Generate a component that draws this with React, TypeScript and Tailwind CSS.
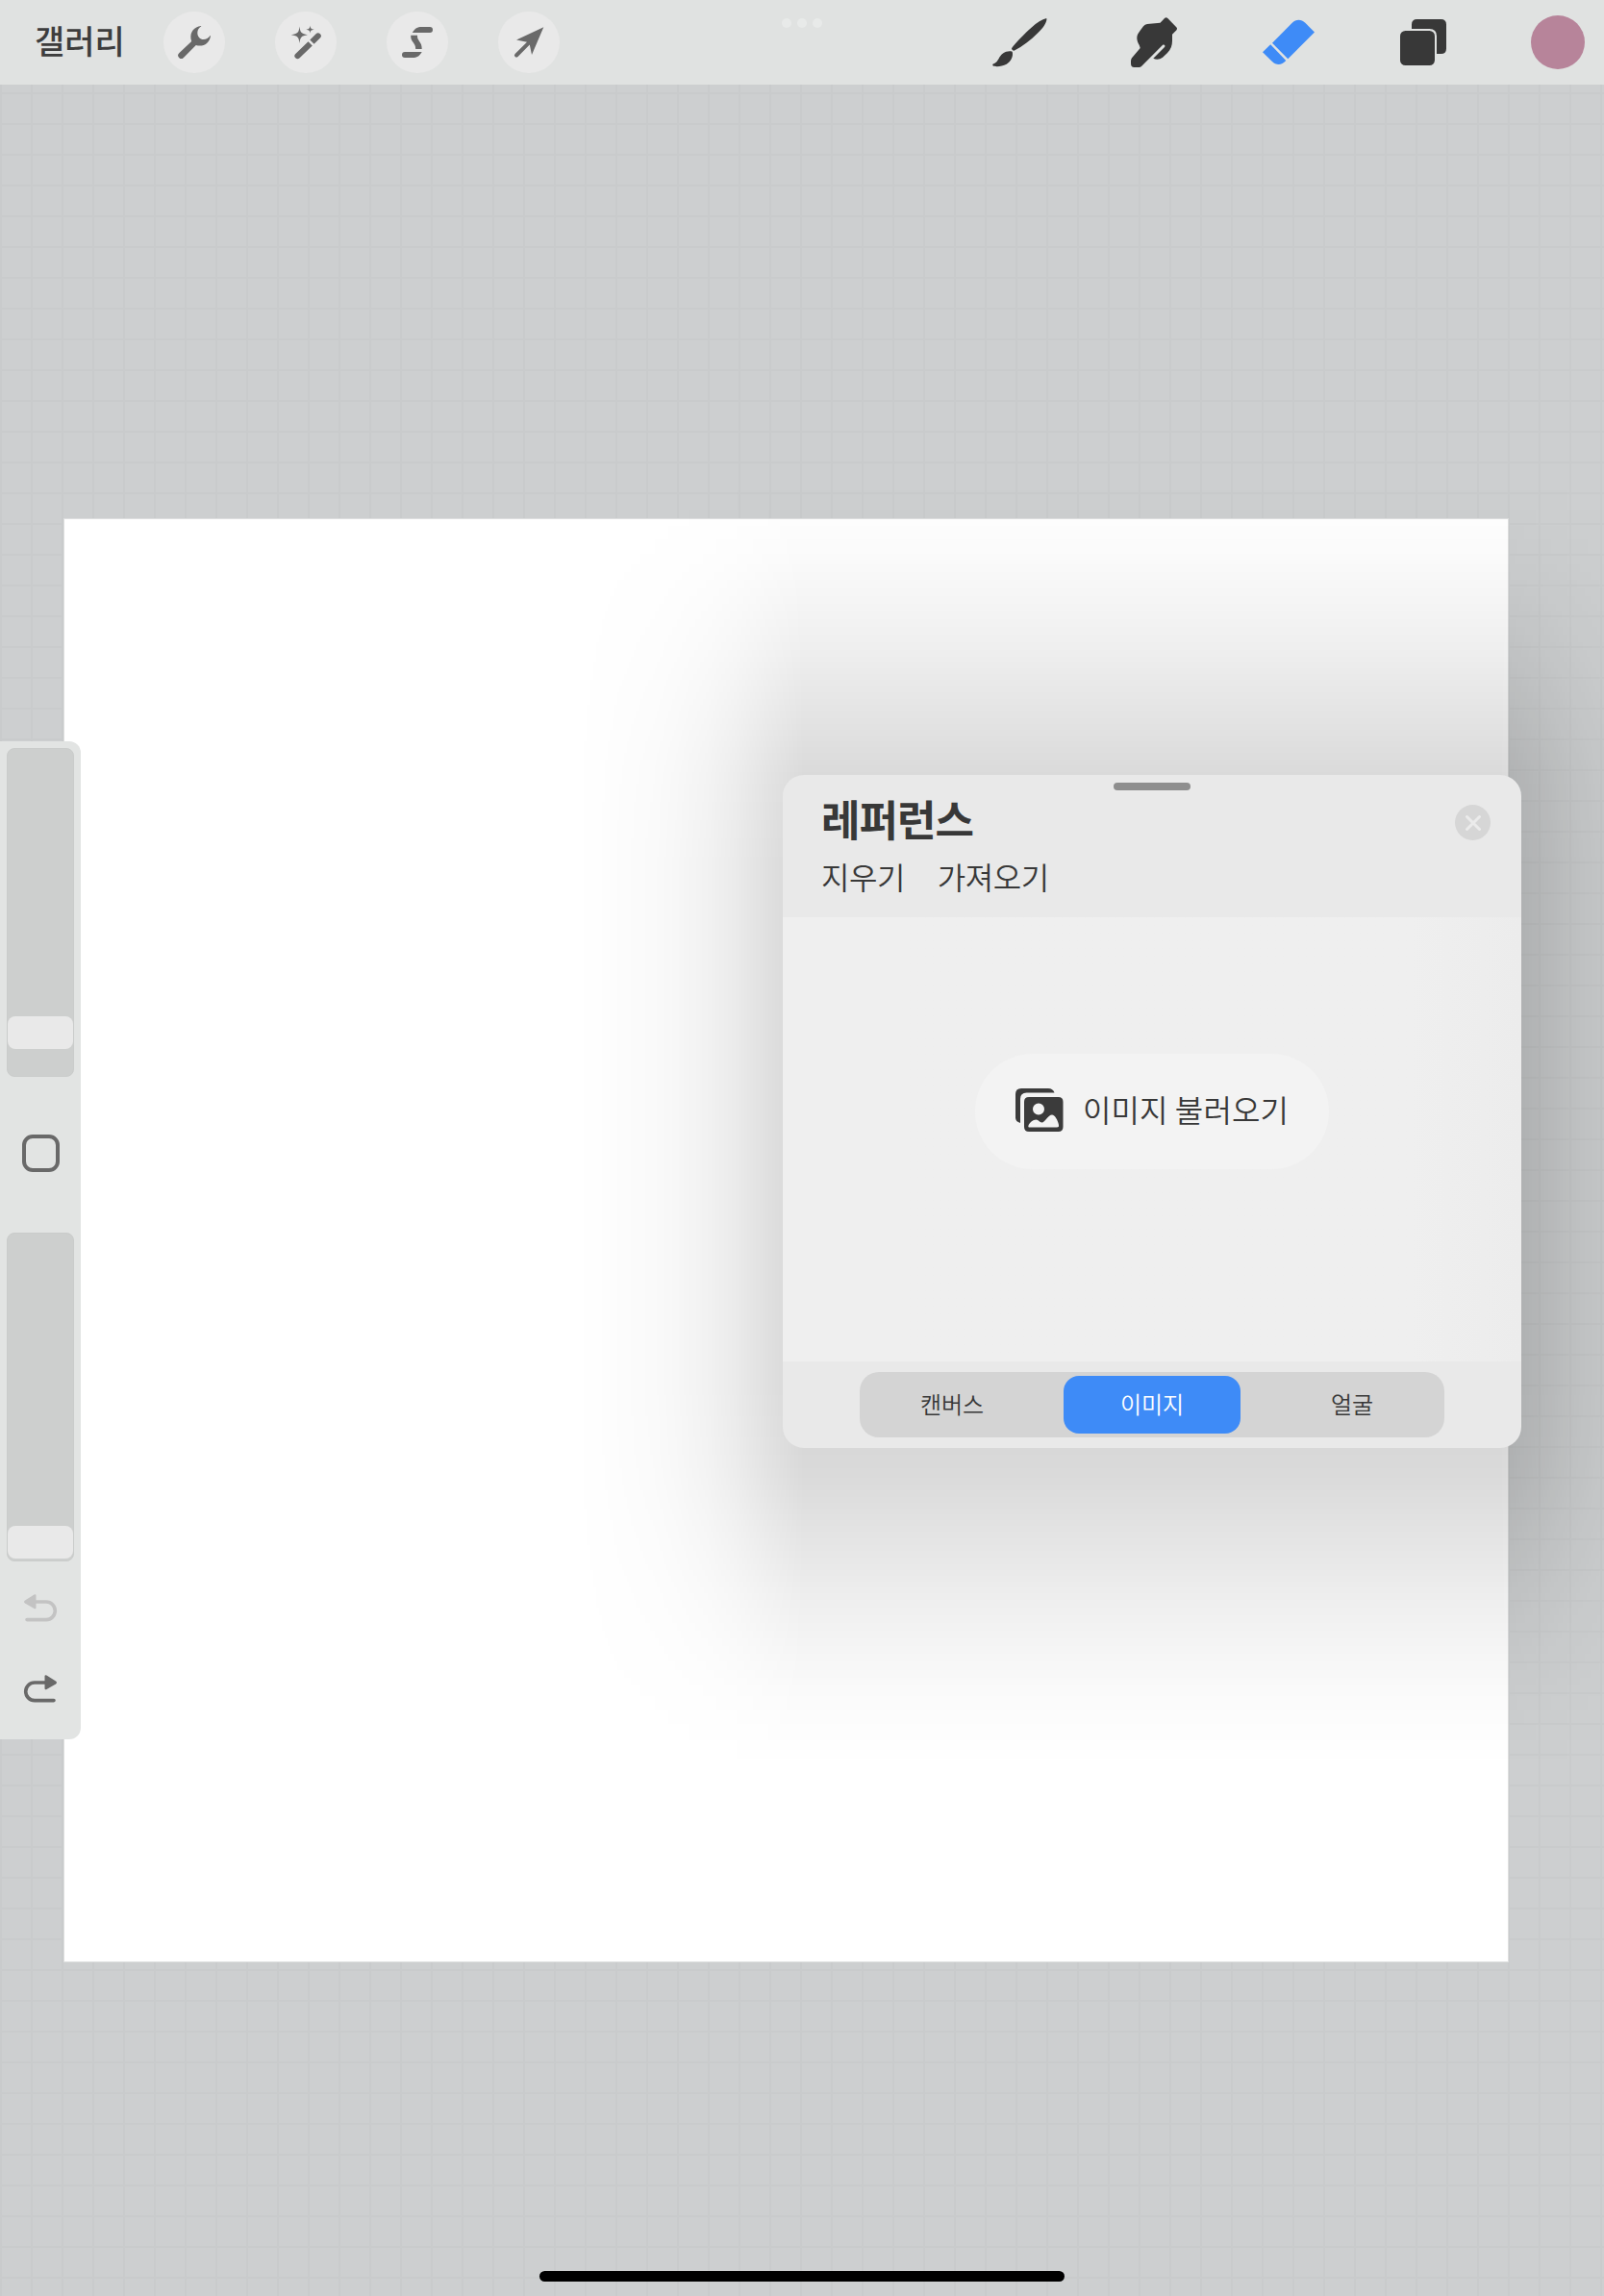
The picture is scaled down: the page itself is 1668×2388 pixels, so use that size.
import React from 'react'

const WrenchIcon = () => (
  <svg viewBox="0 0 64 64" className="w-16 h-16" fill="#696969">
    <path d="M39 15c-7 1-11.500 6-10.500 13.500l.7 2.500L16.200 43.200a3.300 3.300 0 0 0 4.700 4.700L33.800 35c7 2.200 14-1.500 15.200-9.800l-.4-.2c-2.500 3.500-6 5-9.600 3.500-3.500-2-4-5.500-3.500-8 .5-2.500 2-4 3.800-5z" />
  </svg>
)

const WandIcon = () => (
  <svg viewBox="0 0 64 64" className="w-16 h-16" fill="#696969">
    <path d="M25.500 15.500c.7 6.200 1.600 7.600 8.500 8.700-6.900 1-7.800 2.500-8.500 8.800-.7-6.300-1.600-7.800-8.700-8.800 7.100-1.100 8-2.500 8.700-8.700z" transform="translate(0 12) scale(1 1) translate(0 -12)" />
    <path d="M36.500 14.500c.4 3 .9 3.700 4.200 4.200-3.300.5-3.800 1.100-4.200 4.100-.4-3-.9-3.600-4.200-4.100 3.300-.5 3.800-1.200 4.200-4.200z" />
    <path d="M34.500 31.200l4.300 4.300-13.200 12.800a3 3 0 0 1-4.300-4.300zM36.300 29.500l6.300-6.300a3 3 0 0 1 4.300 4.300l-6.300 6.300z" transform="translate(0 0)" />
  </svg>
)

const SelectIcon = () => (
  <svg viewBox="0 0 64 64" className="w-16 h-16" fill="#696969">
    <path d="M26.800 22c2.500-4.500 5.500-6 9.500-6H45a3 3 0 0 1 0 6z" />
    <path d="M25.200 24.800h6.800c-.5 6 5 6.500 4.700 14.200h-6.500c.3-6.500-5.500-7-5-14.200z" />
    <path d="M36.700 42c-2.500 4.500-5.500 6-9.500 6H19a3 3 0 0 1 0-6z" />
  </svg>
)

const ArrowIcon = () => (
  <svg viewBox="0 0 64 64" className="w-16 h-16" fill="#696969">
    <path d="M47.300 16.300L35 45l-2.200-10.500-12.300 12.400a1.900 1.900 0 0 1-2.900-2.900L30 31.700 19 29.500z" />
  </svg>
)

const BrushIcon = () => (
  <svg viewBox="0 0 56 56" className="w-14 h-14 overflow-visible" fill="#383838">
    <path d="M56.300 3c.8 3.500-2.800 9.500-9.300 15.500-7 7.200-15.500 13.500-24.500 18.200-1.400-.2-2.300-1.200-2.500-2.500C24.500 28 33 19.500 40.500 12.700 46.500 7.300 51.500 4 56.300 3z" />
    <path d="M20.700 37.700c1.300 5-1.500 10.300-6 13C10 53 3.500 54 .5 52.200c-.8-1 .3-1.800 1.600-2.200C6.500 48 6.500 42.500 11 39.500c3-2 6.500-2.600 9.700-1.800z" />
  </svg>
)

const SmudgeIcon = () => (
  <svg viewBox="0 0 56 56" className="w-14 h-14" fill="#383838">
    <path d="M39 3q1.700-1.500 3.300 0l9.200 9.600q1.200 1.300 0 2.600L47 19.700v6.800c0 5-1.500 9-5 12.500l-5 4.700c-3 2.200-6.500 2.500-9.700 1L39 33c1.200-1.500-.2-3.200-1.900-2.300L15 53q-1 1-2.600 1H7.500C5 54 4 52.500 4 50v-2.500q0-1.800 1-3.300L13.700 34c-.5-3.500-3.400-6-3.400-10.500.1-3 1-4.500 3-7.300l3.700-5q1.500-2 4-2.200l13.500-1.300z" />
  </svg>
)

const EraserIcon = () => (
  <svg viewBox="0 0 56 56" className="w-14 h-14" fill="#3e8bf7">
    <path d="M11 28.700L31.500 8c4.300-4.300 9.500-4.300 13.800-.3l9.700 9.700-27.700 27.900z" />
    <path d="M9.200 30.300L1 38.300l9.700 9.500c4.500 4.300 9.800 4.500 14.600-.8z" />
  </svg>
)

const LayersIcon = () => (
  <svg viewBox="0 0 48 48" className="w-12 h-12" fill="#383838">
    <rect x="0" y="12" width="36" height="36" rx="5.500" />
    <path d="M12 10V5.500Q12 0 17.500 0h25Q48 0 48 5.500v25q0 5.500-5.500 5.500H38V17.500q0-7.500-7.500-7.500z" />
  </svg>
)

const UndoIcon = () => (
  <svg viewBox="0 0 36 30" className="w-9 h-[30px]">
    <path d="M12 9h12a9.300 9.300 0 0 1 0 18.600H4" fill="none" stroke="currentColor" strokeWidth="3.600" strokeLinecap="round" />
    <path d="M2 7.500l9.500-6q2-1 2 1v12.500q0 2-2 1L2 10.500q-2-1.500 0-3z" fill="currentColor" />
  </svg>
)

const PhotosIcon = () => (
  <svg viewBox="0 0 50 46" className="w-[50px] h-[46px]" fill="#3b3b3b">
    <path d="M5 36Q0 34.500 0 30.500V6q0-6 6-6h28q5 0 6.500 4.500H11.500q-6.500 0-6.500 6.500z" />
    <path fillRule="evenodd" d="M14 9h30.500q5 0 5 5v26q0 5-5 5H14q-5 0-5-5V14q0-5 5-5zM24 15.500a6 6 0 1 0 0 12 6 6 0 0 0 0-12zM14 40.500h29q2.500 0 2-2.500c-1-5-4-10.500-7-10.500-4 0-7.500 8-10.500 8-2.500 0-3.500-3-6-3-3.500 0-7 3.500-8 6q-.6 2 .5 2z" />
  </svg>
)

const TopBar = () => (
  <header className="relative flex h-[88px] w-full items-center justify-between bg-[#e0e2e1] pl-9 pr-5">
    <div className="flex items-center">
      <button className="w-[134px] whitespace-nowrap pb-[5px] text-left text-[34px] font-medium leading-none text-[#3d3d3d]">갤러리</button>
      <div className="flex gap-[52px]">
        <button className="rounded-full bg-[#e9e9e9]"><WrenchIcon /></button>
        <button className="rounded-full bg-[#e9e9e9]"><WandIcon /></button>
        <button className="rounded-full bg-[#e9e9e9]"><SelectIcon /></button>
        <button className="rounded-full bg-[#e9e9e9]"><ArrowIcon /></button>
      </div>
    </div>
    <div className="absolute left-[813px] top-[19px] flex gap-[6px]">
      <span className="h-[10px] w-[10px] rounded-full bg-[#e8eae9]" />
      <span className="h-[10px] w-[10px] rounded-full bg-[#e8eae9]" />
      <span className="h-[10px] w-[10px] rounded-full bg-[#e8eae9]" />
    </div>
    <div className="flex items-center gap-[84px]">
      <BrushIcon />
      <SmudgeIcon />
      <EraserIcon />
      <div className="flex w-14 justify-center"><LayersIcon /></div>
      <span className="h-14 w-14 rounded-full bg-[#b7849a]" />
    </div>
  </header>
)

const Sidebar = () => (
  <aside className="absolute left-0 top-[771px] flex h-[1038px] w-[84px] flex-col items-center rounded-r-xl bg-[#e2e4e3] pt-[7px]">
    <div className="flex h-[342px] w-[70px] flex-col justify-end rounded-lg border border-[#cacccb] bg-[#cdcfce] pb-7">
      <div className="h-[34px] rounded-lg bg-[#e9e9e9]" />
    </div>
    <div className="mt-[60px] h-[39px] w-[39px] rounded-[11px] border-4 border-[#696969]" />
    <div className="mt-[63px] flex h-[342px] w-[70px] flex-col justify-end rounded-lg border border-[#cacccb] bg-[#cdcfce] pb-[2px]">
      <div className="h-[34px] rounded-lg bg-[#e9e9e9]" />
    </div>
    <button className="mt-[33px] text-[#c3c3c3]"><UndoIcon /></button>
    <button className="mt-[54px] -scale-x-100 text-[#696969]"><UndoIcon /></button>
  </aside>
)

// soft shadow behind the floating panel: vertical falloff, masked horizontally
const PanelShadow = () => (
  <div className="absolute left-[596px] top-[500px] h-[1340px] w-[1204px] bg-[linear-gradient(to_bottom,rgba(0,0,0,0)_0px,rgba(0,0,0,0.008)_40px,rgba(0,0,0,0.018)_83px,rgba(0,0,0,0.047)_140px,rgba(0,0,0,0.068)_180px,rgba(0,0,0,0.086)_210px,rgba(0,0,0,0.11)_250px,rgba(0,0,0,0.13)_280px,rgba(0,0,0,0.145)_306px,rgba(0,0,0,0.165)_400px,rgba(0,0,0,0.165)_940px,rgba(0,0,0,0.153)_1006px,rgba(0,0,0,0.145)_1034px,rgba(0,0,0,0.13)_1060px,rgba(0,0,0,0.11)_1090px,rgba(0,0,0,0.086)_1130px,rgba(0,0,0,0.068)_1160px,rgba(0,0,0,0.047)_1200px,rgba(0,0,0,0.018)_1257px,rgba(0,0,0,0.008)_1300px,rgba(0,0,0,0)_1340px)] [mask-image:linear-gradient(to_right,transparent_0px,rgba(0,0,0,0.04)_32px,rgba(0,0,0,0.12)_84px,rgba(0,0,0,0.18)_104px,rgba(0,0,0,0.32)_140px,rgba(0,0,0,0.49)_169px,rgba(0,0,0,0.73)_200px,#000_240px,#000_964px,rgba(0,0,0,0.73)_1004px,rgba(0,0,0,0.49)_1035px,rgba(0,0,0,0.32)_1064px,rgba(0,0,0,0.18)_1100px,transparent_1204px)]" />
)

const ReferencePanel = () => (
  <section className="absolute left-[814px] top-[806px] flex h-[700px] w-[768px] flex-col rounded-[22px] bg-[#e9e9e9] font-[350] text-[#383838]">
    <div className="h-[148px] pt-2">
      <div className="mx-auto h-2 w-20 rounded-full bg-[#8e8e8e]" />
      <div className="flex items-start justify-between pl-10 pr-8">
        <h1 className="mt-[2px] text-[44px] font-bold leading-[54px] tracking-[-1px]">레퍼런스</h1>
        <button className="mt-[15px] flex h-[37px] w-[37px] items-center justify-center rounded-full bg-[#d6d6d6]">
          <svg viewBox="0 0 16 16" className="h-4 w-4" stroke="#ebebeb" strokeWidth="3" strokeLinecap="round">
            <path d="M1.500 1.500l13 13M14.500 1.500l-13 13" />
          </svg>
        </button>
      </div>
      <div className="mt-[13px] flex gap-[34px] pl-10 text-[32px] leading-10 tracking-[-0.500px]">
        <button>지우기</button>
        <button>가져오기</button>
      </div>
    </div>
    <div className="flex h-[462px] items-start justify-center bg-linear-to-r from-[#efefef] from-85% to-[#ececec] pt-[142px]">
      <button className="flex h-[120px] w-[368px] items-center rounded-full bg-[#f3f3f3] pb-[3px] pl-[42px]">
        <PhotosIcon />
        <span className="ml-5 whitespace-nowrap pb-[3px] text-[32px] tracking-[0.100px]">이미지 불러오기</span>
      </button>
    </div>
    <div className="mx-auto mt-[11px] flex h-[68px] w-[608px] items-center justify-between rounded-[20px] bg-[#d4d4d4] px-1 text-2xl">
      <button className="h-[60px] w-[184px] pb-[3px]">캔버스</button>
      <button className="h-[60px] w-[184px] rounded-2xl bg-[#3e8bf7] pb-[3px] text-white">이미지</button>
      <button className="h-[60px] w-[184px] pb-[3px]">얼굴</button>
    </div>
  </section>
)

export default function App() {
  return (
    <div className="relative h-[2388px] w-[1668px] overflow-hidden bg-[#cdcfd0] bg-[linear-gradient(to_right,#c9cbcc_2px,transparent_2px),linear-gradient(to_bottom,#c9cbcc_2px,transparent_2px)] bg-[size:32px_32px] font-['Noto_Sans_CJK_KR',sans-serif]">
      <TopBar />
      <main className="ml-[66px] mt-[451px] h-[1502px] w-[1503px] border border-[#dedfdf] bg-white" />
      <PanelShadow />
      <Sidebar />
      <ReferencePanel />
      <div className="absolute left-[561px] top-[2362px] h-[11px] w-[546px] rounded-full bg-black" />
    </div>
  )
}
